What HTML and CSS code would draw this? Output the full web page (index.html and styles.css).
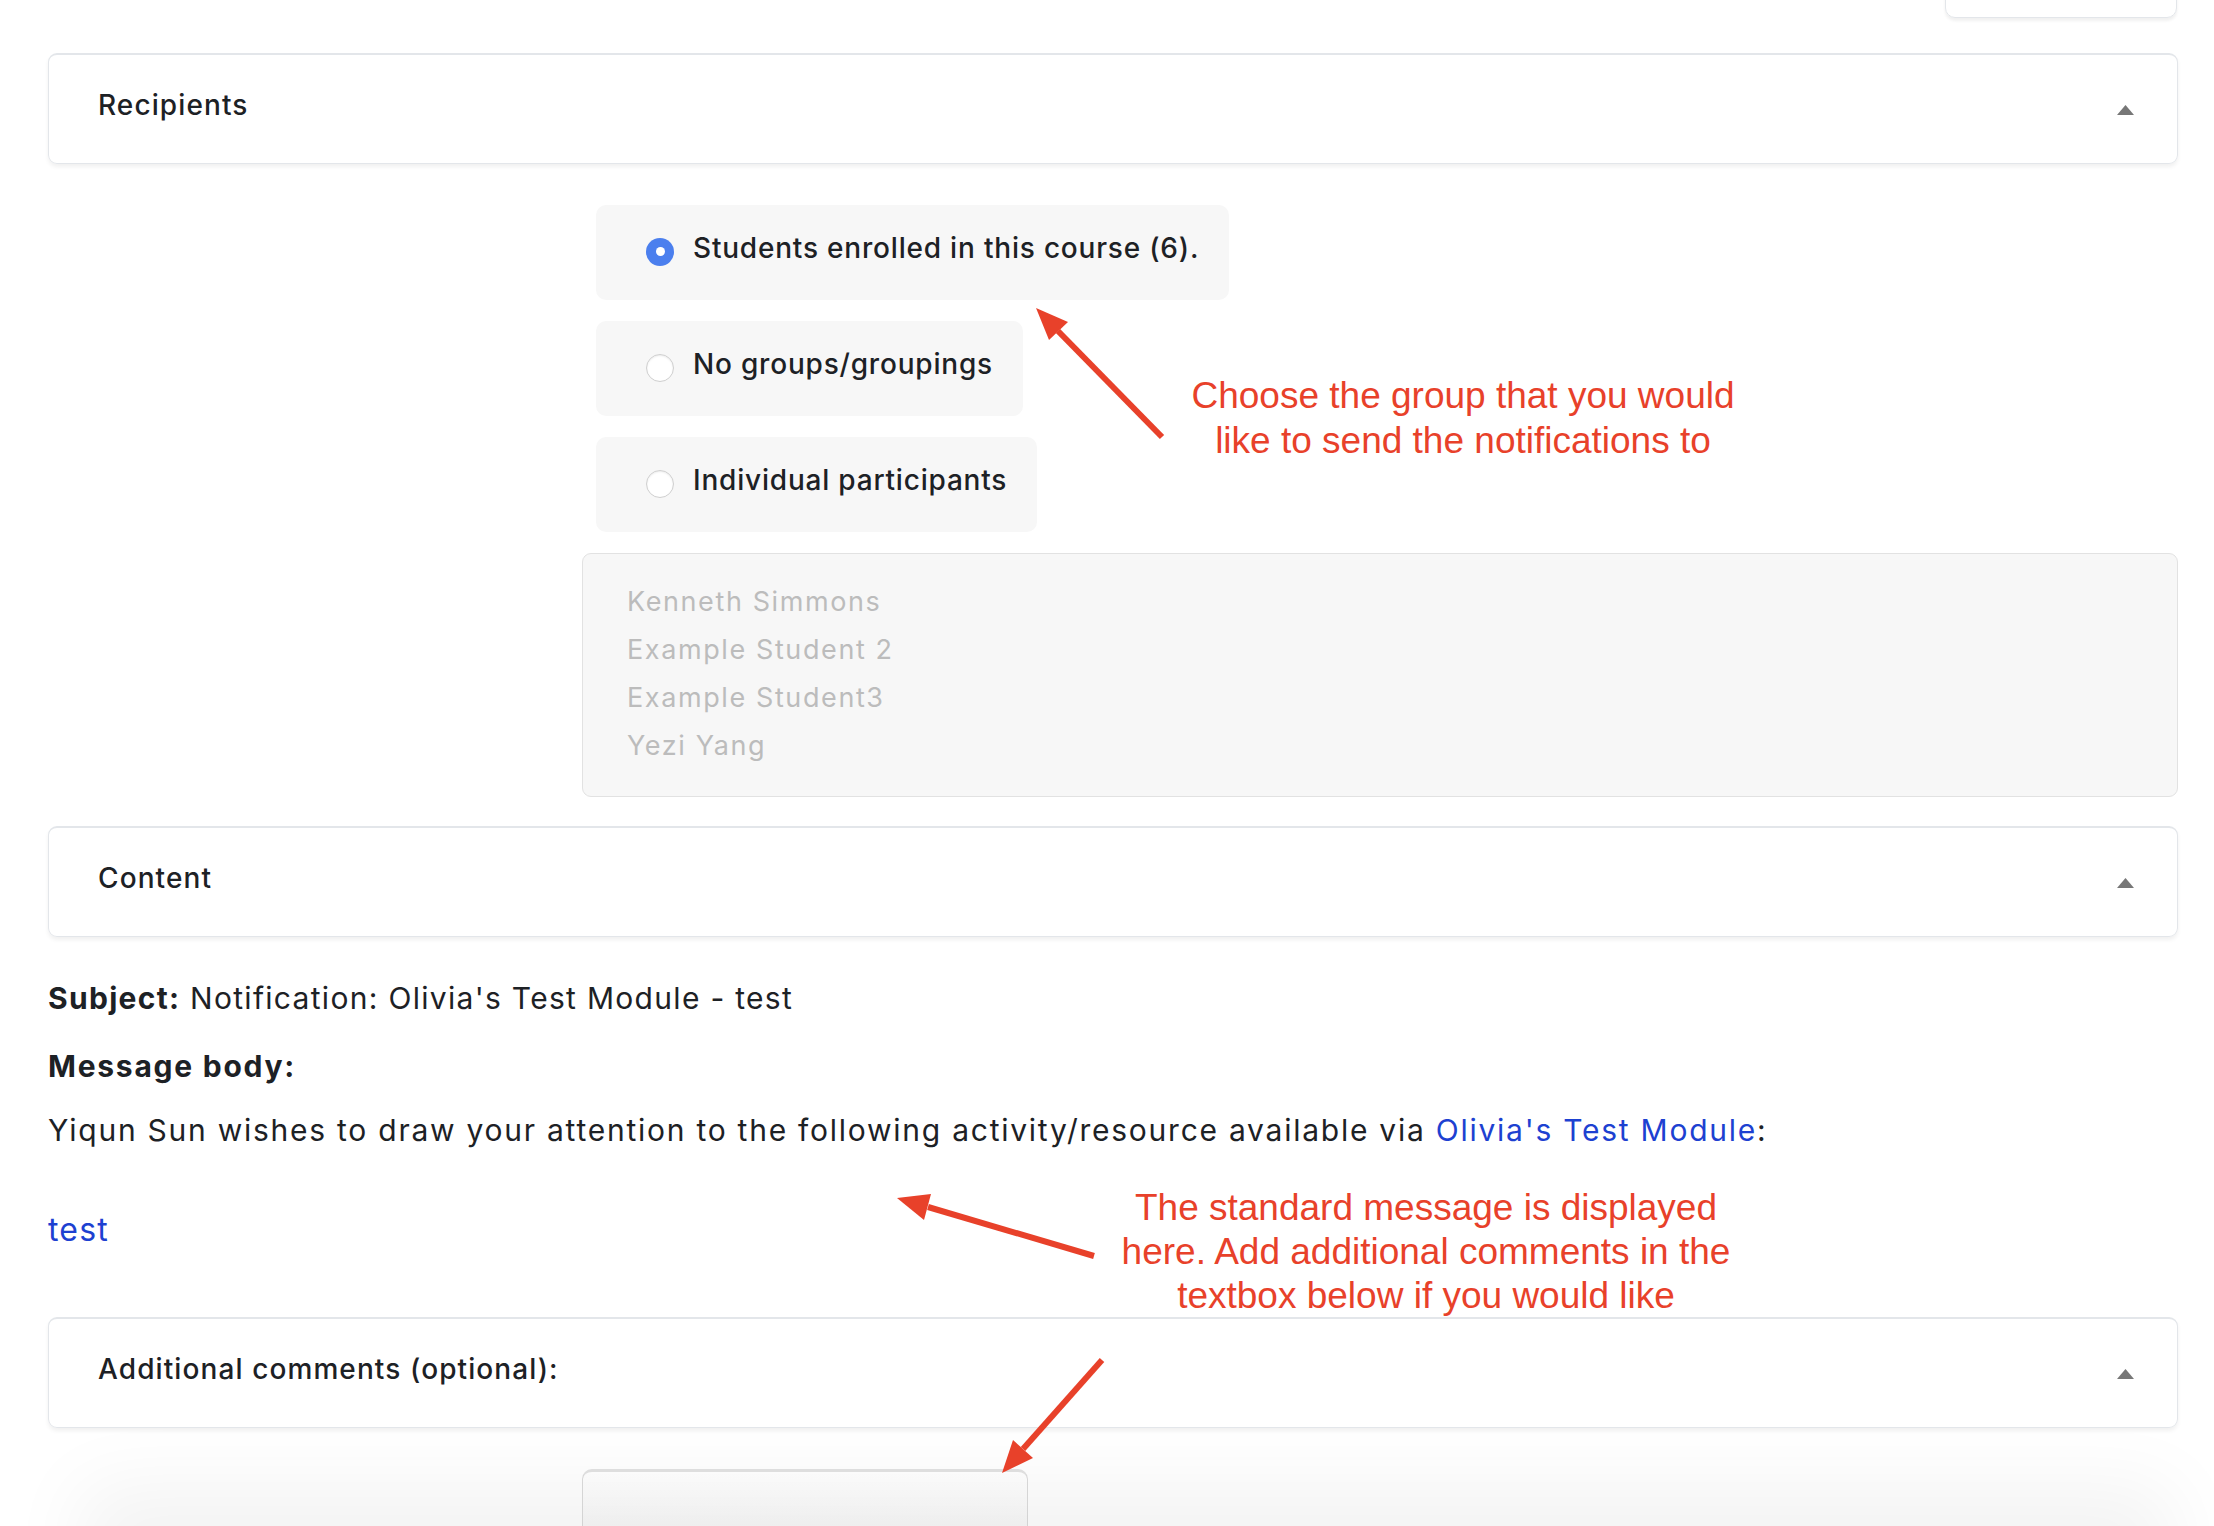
FILE: index.html
```html
<!DOCTYPE html>
<html lang="en">
  <head>
    <meta charset="UTF-8" />
    <meta name="viewport" content="width=device-width, initial-scale=1.0" />
    <title>Send notification</title>
    <link rel="stylesheet" href="styles.css">
  </head>
  <body>
    <div class="page">
      <div class="top-actions">
        <div class="top-button"></div>
      </div>

      <!-- Recipients -->
      <div class="section-head">
        <span class="head-title">Recipients</span>
        <svg class="caret" width="17" height="10" viewBox="0 0 17 10"><polygon points="8.5,0 17,10 0,10" /></svg>
      </div>

      <div class="field">
        <div class="options">
          <label class="option">
            <span class="radio checked"></span>
            <span class="option-text">Students enrolled in this course (6).</span>
          </label>
          <label class="option">
            <span class="radio"></span>
            <span class="option-text">No groups/groupings</span>
          </label>
          <label class="option">
            <span class="radio"></span>
            <span class="option-text">Individual participants</span>
          </label>
        </div>
        <div class="participants">
          <p>Kenneth Simmons</p>
          <p>Example Student 2</p>
          <p>Example Student3</p>
          <p>Yezi Yang</p>
        </div>
      </div>

      <!-- Content -->
      <div class="section-head section-content">
        <span class="head-title">Content</span>
        <svg class="caret" width="17" height="10" viewBox="0 0 17 10"><polygon points="8.5,0 17,10 0,10" /></svg>
      </div>

      <div class="message">
        <p class="subject"><b>Subject:</b> Notification: Olivia's Test Module - test</p>
        <p class="body-label"><b>Message body:</b></p>
        <p class="body-text">Yiqun Sun wishes to draw your attention to the following activity/resource available via <a href="#">Olivia's Test Module</a>:</p>
        <p class="activity"><a href="#">test</a></p>
      </div>

      <!-- Additional comments -->
      <div class="section-head section-comments">
        <span class="head-title">Additional comments (optional):</span>
        <svg class="caret" width="17" height="10" viewBox="0 0 17 10"><polygon points="8.5,0 17,10 0,10" /></svg>
      </div>

      <div class="field">
        <div class="editor"></div>
      </div>
    </div>

    <div class="footer-shade"></div>

    <!-- Annotations -->
    <svg class="notes" width="2214" height="1526" viewBox="0 0 2214 1526">
      <g class="note-text">
        <text x="1463" y="408">Choose the group that you would</text>
        <text x="1463" y="453">like to send the notifications to</text>
        <text x="1426" y="1220">The standard message is displayed</text>
        <text x="1426" y="1264">here. Add additional comments in the</text>
        <text x="1426" y="1308">textbox below if you would like</text>
      </g>
      <g class="arrow">
        <line x1="1162" y1="437" x2="1058" y2="331" />
        <polygon points="1036,308 1068,322 1049,340" />
        <line x1="1094" y1="1256" x2="928" y2="1207" />
        <polygon points="897,1198 931,1194 924,1220" />
        <line x1="1102" y1="1360" x2="1023" y2="1449" />
        <polygon points="1002,1473 1013,1440 1033,1458" />
      </g>
    </svg>
  </body>
</html>
```

FILE: styles.css
```css
/* Reset */
* {
  margin: 0;
  padding: 0;
  box-sizing: border-box;
}

body {
  font-family: Inter, "Noto Sans", sans-serif;
  color: #1d2125;
  background: #fff;
  width: 2214px;
  height: 1526px;
  overflow: hidden;
  position: relative;
}

.page {
  padding: 0 36px 0 48px;
}

/* Bouton coupé en haut */
.top-actions {
  display: flex;
  justify-content: flex-end;
  margin-right: 1px;
}
.top-button {
  width: 232px;
  height: 60px;
  margin-top: -42px;
  border: 1px solid #e3e6ea;
  border-radius: 10px;
  box-shadow: 0 3px 3px rgba(0, 0, 0, 0.06);
}

/* En-têtes de section */
.section-head {
  display: flex;
  align-items: center;
  justify-content: space-between;
  height: 111px;
  margin-top: 35px;
  padding: 0 43px 0 49px;
  border: 1px solid #e3e6ea;
  border-top-width: 2px;
  border-radius: 9px;
  box-shadow: 0 3px 4px rgba(0, 0, 0, 0.06);
  font-size: 28px;
  font-weight: 500;
  letter-spacing: 1.1px;
}
.head-title {
  margin-bottom: 8px;
}
.caret {
  fill: #777;
  margin-top: 2px;
}
.section-content {
  margin-top: 29px;
}
.section-comments {
  margin-top: 63px;
}

/* Champ du formulaire */
.field {
  margin-left: 534px;
}

.options {
  display: flex;
  flex-direction: column;
  gap: 21px;
  margin-top: 41px;
  padding-left: 14px;
}
.option {
  display: flex;
  align-items: center;
  gap: 19px;
  width: fit-content;
  height: 95px;
  padding: 0 30px 0 50px;
  background: #f7f7f7;
  border-radius: 10px;
  font-size: 28px;
  font-weight: 500;
  letter-spacing: 0.8px;
}
.option-text {
  margin-bottom: 10px;
}
.radio {
  width: 28px;
  height: 28px;
  border-radius: 50%;
  border: 1.5px solid #cfcfcf;
  background: #fff;
  box-shadow: inset 0 1px 2px rgba(0, 0, 0, 0.08);
  margin-top: -2px;
  display: flex;
  align-items: center;
  justify-content: center;
}
.radio.checked {
  border: none;
  background: #4b7fee;
  box-shadow: none;
}
.radio.checked::after {
  content: "";
  width: 9px;
  height: 9px;
  border-radius: 50%;
  background: #fff;
}

/* Liste des participants (désactivée) */
.participants {
  margin-top: 21px;
  padding: 24px 44px 26px;
  background: #f7f7f7;
  border: 1px solid #e2e2e2;
  border-radius: 9px;
  color: #bcbcbc;
  font-size: 27px;
  line-height: 48px;
  letter-spacing: 1.6px;
}

/* Contenu du message */
.message {
  font-size: 30px;
  line-height: 44px;
  letter-spacing: 1.75px;
}
.message a {
  color: #1d41d1;
  text-decoration: none;
}
.subject {
  margin-top: 39px;
  letter-spacing: 1.3px;
}
.body-label {
  margin-top: 24px;
}
.body-text {
  margin-top: 20px;
}
.activity {
  margin-top: 54px;
  font-size: 32px;
  line-height: 48px;
  letter-spacing: 1.2px;
}

.editor {
  width: 446px;
  height: 80px;
  margin-top: 41px;
  border: 1px solid #dcdcdc;
  border-top: 3px solid #e2e2e2;
  border-radius: 10px;
  background: linear-gradient(#fff, #f6f6f6);
}

/* Ombre du pied de page collant */
.footer-shade {
  position: absolute;
  left: 120px;
  right: 80px;
  bottom: -40px;
  height: 40px;
  box-shadow: 0 0 80px 40px rgba(0, 0, 0, 0.05);
  pointer-events: none;
}

/* Annotations */
.notes {
  position: absolute;
  top: 0;
  left: 0;
  pointer-events: none;
}
.note-text {
  font-family: "Liberation Sans", Arial, sans-serif;
  font-size: 37px;
  fill: #e8412a;
  text-anchor: middle;
}
.arrow line {
  stroke: #e8412a;
  stroke-width: 6;
}
.arrow polygon {
  fill: #e8412a;
}
```
